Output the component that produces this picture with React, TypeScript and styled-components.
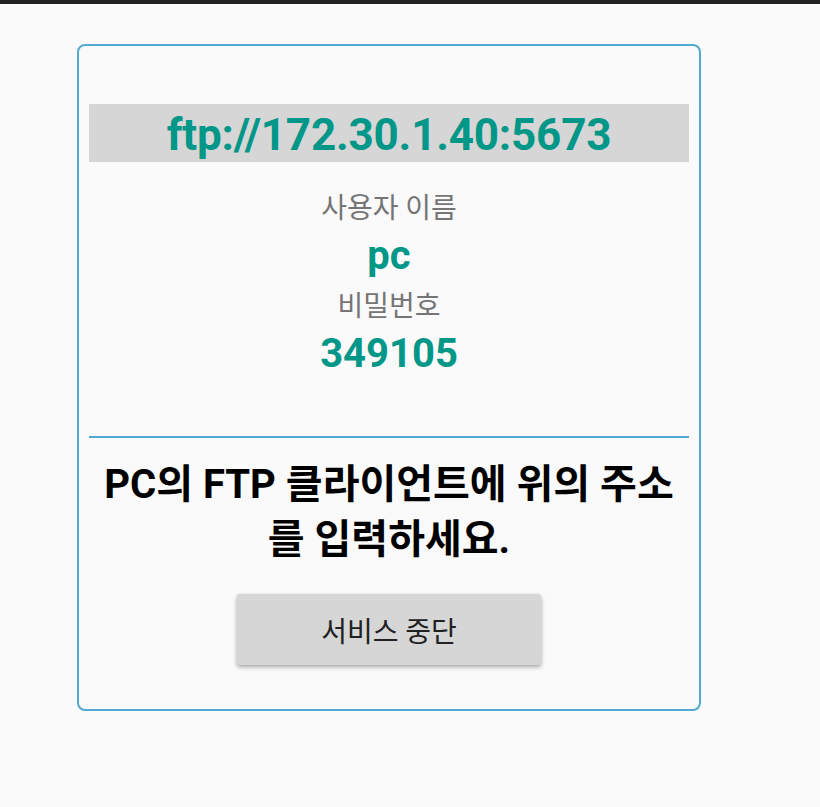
import React from "react";
import styled, { createGlobalStyle } from "styled-components";

const Global = createGlobalStyle`
  html, body { margin: 0; padding: 0; background: #fafafa; }
  body { font-family: Roboto, "Noto Sans CJK KR", sans-serif; }
`;

const Page = styled.div`
  width: 820px;
  height: 807px;
  background: #fafafa;
  display: flex;
  flex-direction: column;
  overflow: hidden;
`;

const StatusStrip = styled.div`
  height: 4px;
  background: #212121;
`;

const Body = styled.div`
  padding: 40px 0 0 77px;
`;

const Card = styled.div`
  width: 624px;
  height: 667px;
  box-sizing: border-box;
  border: 2px solid #52aad0;
  border-radius: 8px;
  padding: 58px 10px 0 10px;
  display: flex;
  flex-direction: column;
  align-items: stretch;
`;

const AddressBand = styled.div`
  height: 58px;
  box-sizing: border-box;
  padding-top: 3px;
  background: #d6d6d6;
  display: flex;
  align-items: center;
  justify-content: center;
  color: #009688;
  font-weight: 700;
  font-size: 44px;
  letter-spacing: -0.2px;
`;

const Label = styled.div`
  text-align: center;
  color: #757575;
  font-size: 28px;
  line-height: 45px;
  padding-top: 4px;
`;

const Value = styled.div<{ $size: number }>`
  text-align: center;
  color: #009688;
  font-weight: 700;
  font-size: ${(p) => p.$size}px;
  line-height: 49px;
`;

const Info = styled.div`
  display: flex;
  flex-direction: column;
  padding-top: 20px;
  height: 274px;
  box-sizing: border-box;
`;

const Divider = styled.div`
  height: 2px;
  background: #52aad0;
`;

const Message = styled.div`
  margin-top: 19px;
  text-align: center;
  color: #000;
  font-weight: 700;
  font-size: 40px;
  line-height: 55px;
  word-break: break-all;
`;

const ButtonRow = styled.div`
  display: flex;
  justify-content: center;
  margin-top: 27px;
`;

const StopButton = styled.button`
  width: 304px;
  height: 71px;
  border: none;
  border-radius: 3px;
  background: #d6d6d6;
  color: #212121;
  font-family: Roboto, "Noto Sans CJK KR", sans-serif;
  font-size: 28px;
  box-shadow: 0 2px 4px rgba(0, 0, 0, 0.35);
`;

export default function App() {
  return (
    <Page>
      <Global />
      <StatusStrip />
      <Body>
        <Card>
          <AddressBand>ftp://172.30.1.40:5673</AddressBand>
          <Info>
            <Label>사용자 이름</Label>
            <Value $size={40}>pc</Value>
            <Label>비밀번호</Label>
            <Value $size={40}>349105</Value>
          </Info>
          <Divider />
          <Message>PC의 FTP 클라이언트에 위의 주소를 입력하세요.</Message>
          <ButtonRow>
            <StopButton>서비스 중단</StopButton>
          </ButtonRow>
        </Card>
      </Body>
    </Page>
  );
}
